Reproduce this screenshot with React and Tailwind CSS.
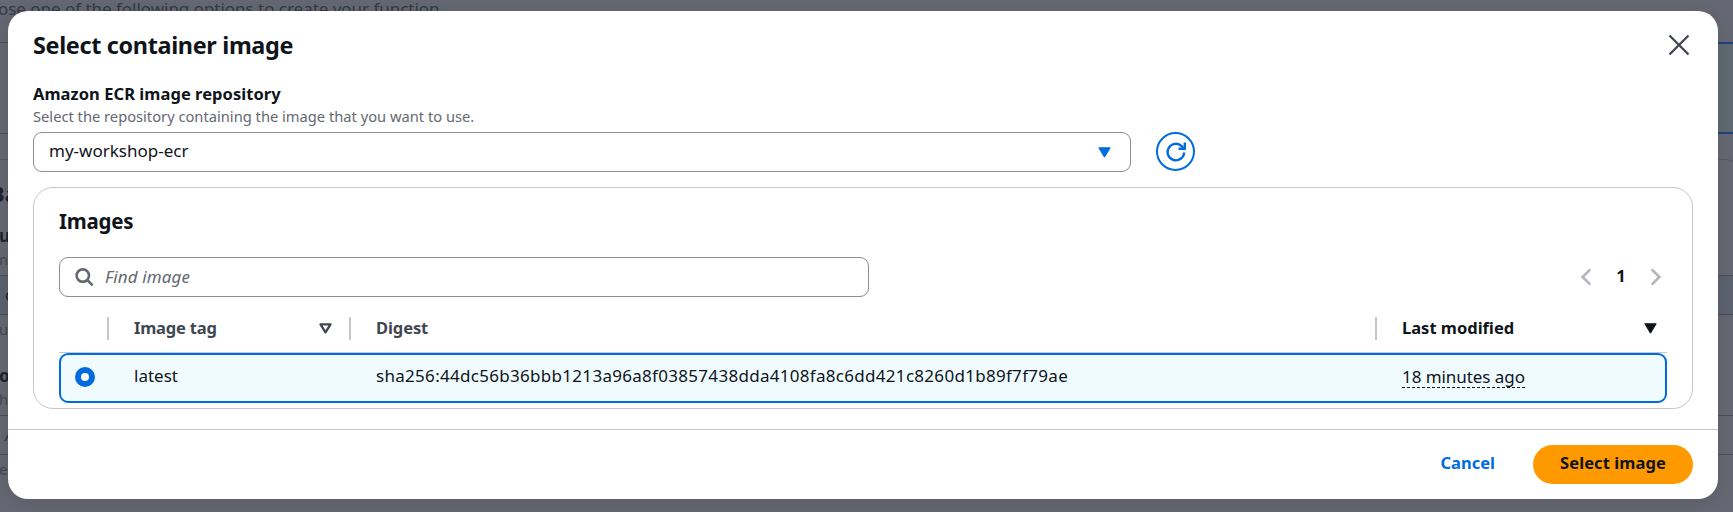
function Backdrop() {
  return (
    <div className="h-[512px] w-full overflow-hidden bg-[#656872] text-[17px] text-[#343a47]">
      <div className="flex h-[14px] items-center pt-[3px] whitespace-nowrap">
        <span className="-ml-0.5 tracking-[-0.03px]">ose one of the following options to create your function.</span>
      </div>
      <div className="-mx-3 mt-7 grid h-[92px] grid-cols-2">
        <div className="border-y border-[#484d59]" />
        <div className="border-y-2 border-[#1d457b] bg-[#5f6a73]" />
      </div>
      <div className="-mx-3 mt-[25px] h-[400px] rounded-tr-[20px] border-t border-r border-[#545864] pt-[19px] pl-2">
        <div className="-ml-[6px] flex h-[29px] items-center text-[22px] font-bold text-[#1d222d]">Ba</div>
        <div className="mt-[17px] flex h-[22px] items-center pl-[3px] font-bold text-[#1d222d]">u</div>
        <div className="mt-0.5 flex h-5 items-center pl-[3px] text-[14.7px] text-[#424855]">nt</div>
        <div className="mt-1.5 flex h-10 items-center border-y border-[#484d59] bg-[#5c6270] pl-[9px] text-[#1d222d]">
          c
        </div>
        <div className="mt-1 flex h-5 items-center pl-[3px] text-[14.7px] text-[#424855]">ur</div>
        <div className="mt-[26px] flex h-[22px] items-center pl-[3px] font-bold text-[#1d222d]">o</div>
        <div className="mt-0.5 flex h-5 items-center pl-[3px] text-[14.7px] text-[#424855]">h</div>
        <div className="mt-1.5 flex h-10 items-center border-y border-[#484d59] pl-[9px] text-[#343a47] italic">A</div>
        <div className="mt-1 flex h-5 items-center pl-[3px] text-[14.7px] text-[#424855]">e</div>
      </div>
    </div>
  );
}

function CloseIcon() {
  return (
    <svg className="h-[22px] w-[22px]" viewBox="0 0 22 22" fill="none" stroke="#424650" strokeWidth="2.3">
      <path d="M1.5 1.5l19 19M20.5 1.5l-19 19" />
    </svg>
  );
}

function RefreshIcon() {
  return (
    <svg className="h-5 w-5" viewBox="0 0 20 20" fill="none" stroke="#006ce0" strokeWidth="2.4">
      <path d="M18.2 10.5a8.3 8.3 0 1 1-2.5-6.4l2 2.4" />
      <path d="M18.8 0.6v6.1h-6.3" />
    </svg>
  );
}

function SearchIcon() {
  return (
    <svg className="h-[19px] w-[19px]" viewBox="0 0 19 19" fill="none" stroke="#656871" strokeWidth="2.6">
      <circle cx="7.8" cy="7.6" r="6.2" />
      <path d="M12.2 12l5.4 5.4" />
    </svg>
  );
}

function Chevron({ d }) {
  return (
    <svg className="h-[18px] w-3" viewBox="0 0 12 18" fill="none" stroke="#b4b4bb" strokeWidth="2.6">
      <path d={d} />
    </svg>
  );
}

function Divider() {
  return <span className="h-[23px] w-0.5 bg-[#c6c6cd]" />;
}

function Images() {
  return (
    <section className="mt-[15px] flex h-[222px] flex-col rounded-[20px] border border-[#c6c6cd] px-[25px] pt-[19px]">
      <h2 className="h-7 text-[20.5px] leading-7 font-bold tracking-[-0.25px]">Images</h2>
      <div className="mt-[22px] flex h-10 items-center justify-between">
        <div className="flex h-10 w-[810px] items-center rounded-[9px] border border-[#8c8c94] pl-[15px] text-[#656871] italic">
          <SearchIcon />
          <span className="ml-[11px] pb-px tracking-[0.12px]">Find image</span>
        </div>
        <div className="flex items-center pr-[5px]">
          <Chevron d="M10.3 1.4L2.6 9l7.7 7.6" />
          <span className="mx-[24px] w-[10px] pb-0.5 text-center text-[16.5px] font-bold">1</span>
          <Chevron d="M1.7 1.4L9.4 9l-7.7 7.6" />
        </div>
      </div>
      <div className="mt-2 grid h-12 shrink-0 grid-cols-[50px_242px_1026px_290px] items-center border-b border-[#c6c6cd] text-[16.5px] font-bold text-[#424650]">
        <div className="flex justify-end">
          <Divider />
        </div>
        <div className="flex items-center pl-[25px]">
          <span className="grow pb-px tracking-[-0.2px]">Image tag</span>
          <svg className="mr-[17px] h-[11px] w-[13px]" viewBox="0 0 13 11" fill="none" stroke="#424650" strokeWidth="2.3" strokeLinejoin="round">
            <path d="M1.5 1.4h10L6.5 9.4z" />
          </svg>
          <Divider />
        </div>
        <div className="flex items-center pl-[25px]">
          <span className="grow pb-px tracking-[-0.1px]">Digest</span>
          <Divider />
        </div>
        <div className="flex items-center pr-[10px] pl-[25px] text-[#0f141a]">
          <span className="grow pb-px">Last modified</span>
          <svg className="h-[11px] w-[13px]" viewBox="0 0 13 11" fill="#0f141a" stroke="#0f141a" strokeLinejoin="round">
            <path d="M0.8 0.8h11.4L6.5 10.2z" />
          </svg>
        </div>
      </div>
      <div className="grid h-[50px] shrink-0 grid-cols-[48px_242px_1026px_288px] items-center rounded-[9px] border-2 border-[#006ce0] bg-[#f0fbff]">
        <div className="pb-0.5 pl-3.5">
          <div className="h-5 w-5 rounded-full border-[6px] border-[#006ce0] bg-white" />
        </div>
        <div className="pb-1 pl-[25px]">latest</div>
        <div className="pb-1 pl-[25px] tracking-[0.296px]">
          sha256:44dc56b36bbb1213a96a8f03857438dda4108fa8c6dd421c8260d1b89f7f79ae
        </div>
        <div className="flex pb-px pl-[25px]">
          <span className="border-b border-dashed border-[#0f141a] leading-[20px] tracking-[-0.06px]">18 minutes ago</span>
        </div>
      </div>
    </section>
  );
}

export default function App() {
  return (
    <div className="relative h-[512px] w-[1733px] overflow-hidden font-['Noto_Sans','Open_Sans',sans-serif]">
      <Backdrop />
      <div
        role="dialog"
        className="absolute top-[11px] left-2 flex h-[488px] w-[1710px] flex-col rounded-[20px] bg-white text-[17px] text-[#0f141a] shadow-[0_4px_20px_1px_rgba(0,7,22,0.1)]"
      >
        <div className="px-[25px]">
          <div className="flex items-center justify-between pt-[19px] pr-[3px]">
            <h1 className="text-[23.4px] leading-[30px] font-bold tracking-[-0.33px]">Select container image</h1>
            <CloseIcon />
          </div>
          <div className="mt-[23px] h-[22px] text-[16.5px] leading-[22px] font-bold tracking-[0.05px]">
            Amazon ECR image repository
          </div>
          <div className="mt-px h-5 text-[14.7px] leading-5 text-[#656871]">
            Select the repository containing the image that you want to use.
          </div>
          <div className="mt-1.5 flex items-center">
            <div className="flex h-10 w-[1098px] items-center justify-between rounded-[9px] border border-[#8c8c94] pr-[19px] pl-[15px]">
              <span className="pb-0.5">my-workshop-ecr</span>
              <svg className="h-[11px] w-[13px]" viewBox="0 0 13 11" fill="#006ce0" stroke="#006ce0" strokeLinejoin="round">
                <path d="M0.8 0.8h11.4L6.5 10.2z" />
              </svg>
            </div>
            <div className="mb-px ml-[25px] flex h-[39px] w-[39px] items-center justify-center rounded-full border-2 border-[#006ce0]">
              <RefreshIcon />
            </div>
          </div>
          <Images />
        </div>
        <div className="mt-5 flex h-[70px] items-center justify-end border-t border-[#c6c6cd] px-[25px] text-[16.5px] font-bold">
          <span className="mr-[38px] pb-0.5 text-[#006ce0]">Cancel</span>
          <div className="flex h-[39px] w-40 items-center justify-center rounded-full bg-[#ff9900] pb-0.5 tracking-[0.08px]">
            Select image
          </div>
        </div>
      </div>
    </div>
  );
}
